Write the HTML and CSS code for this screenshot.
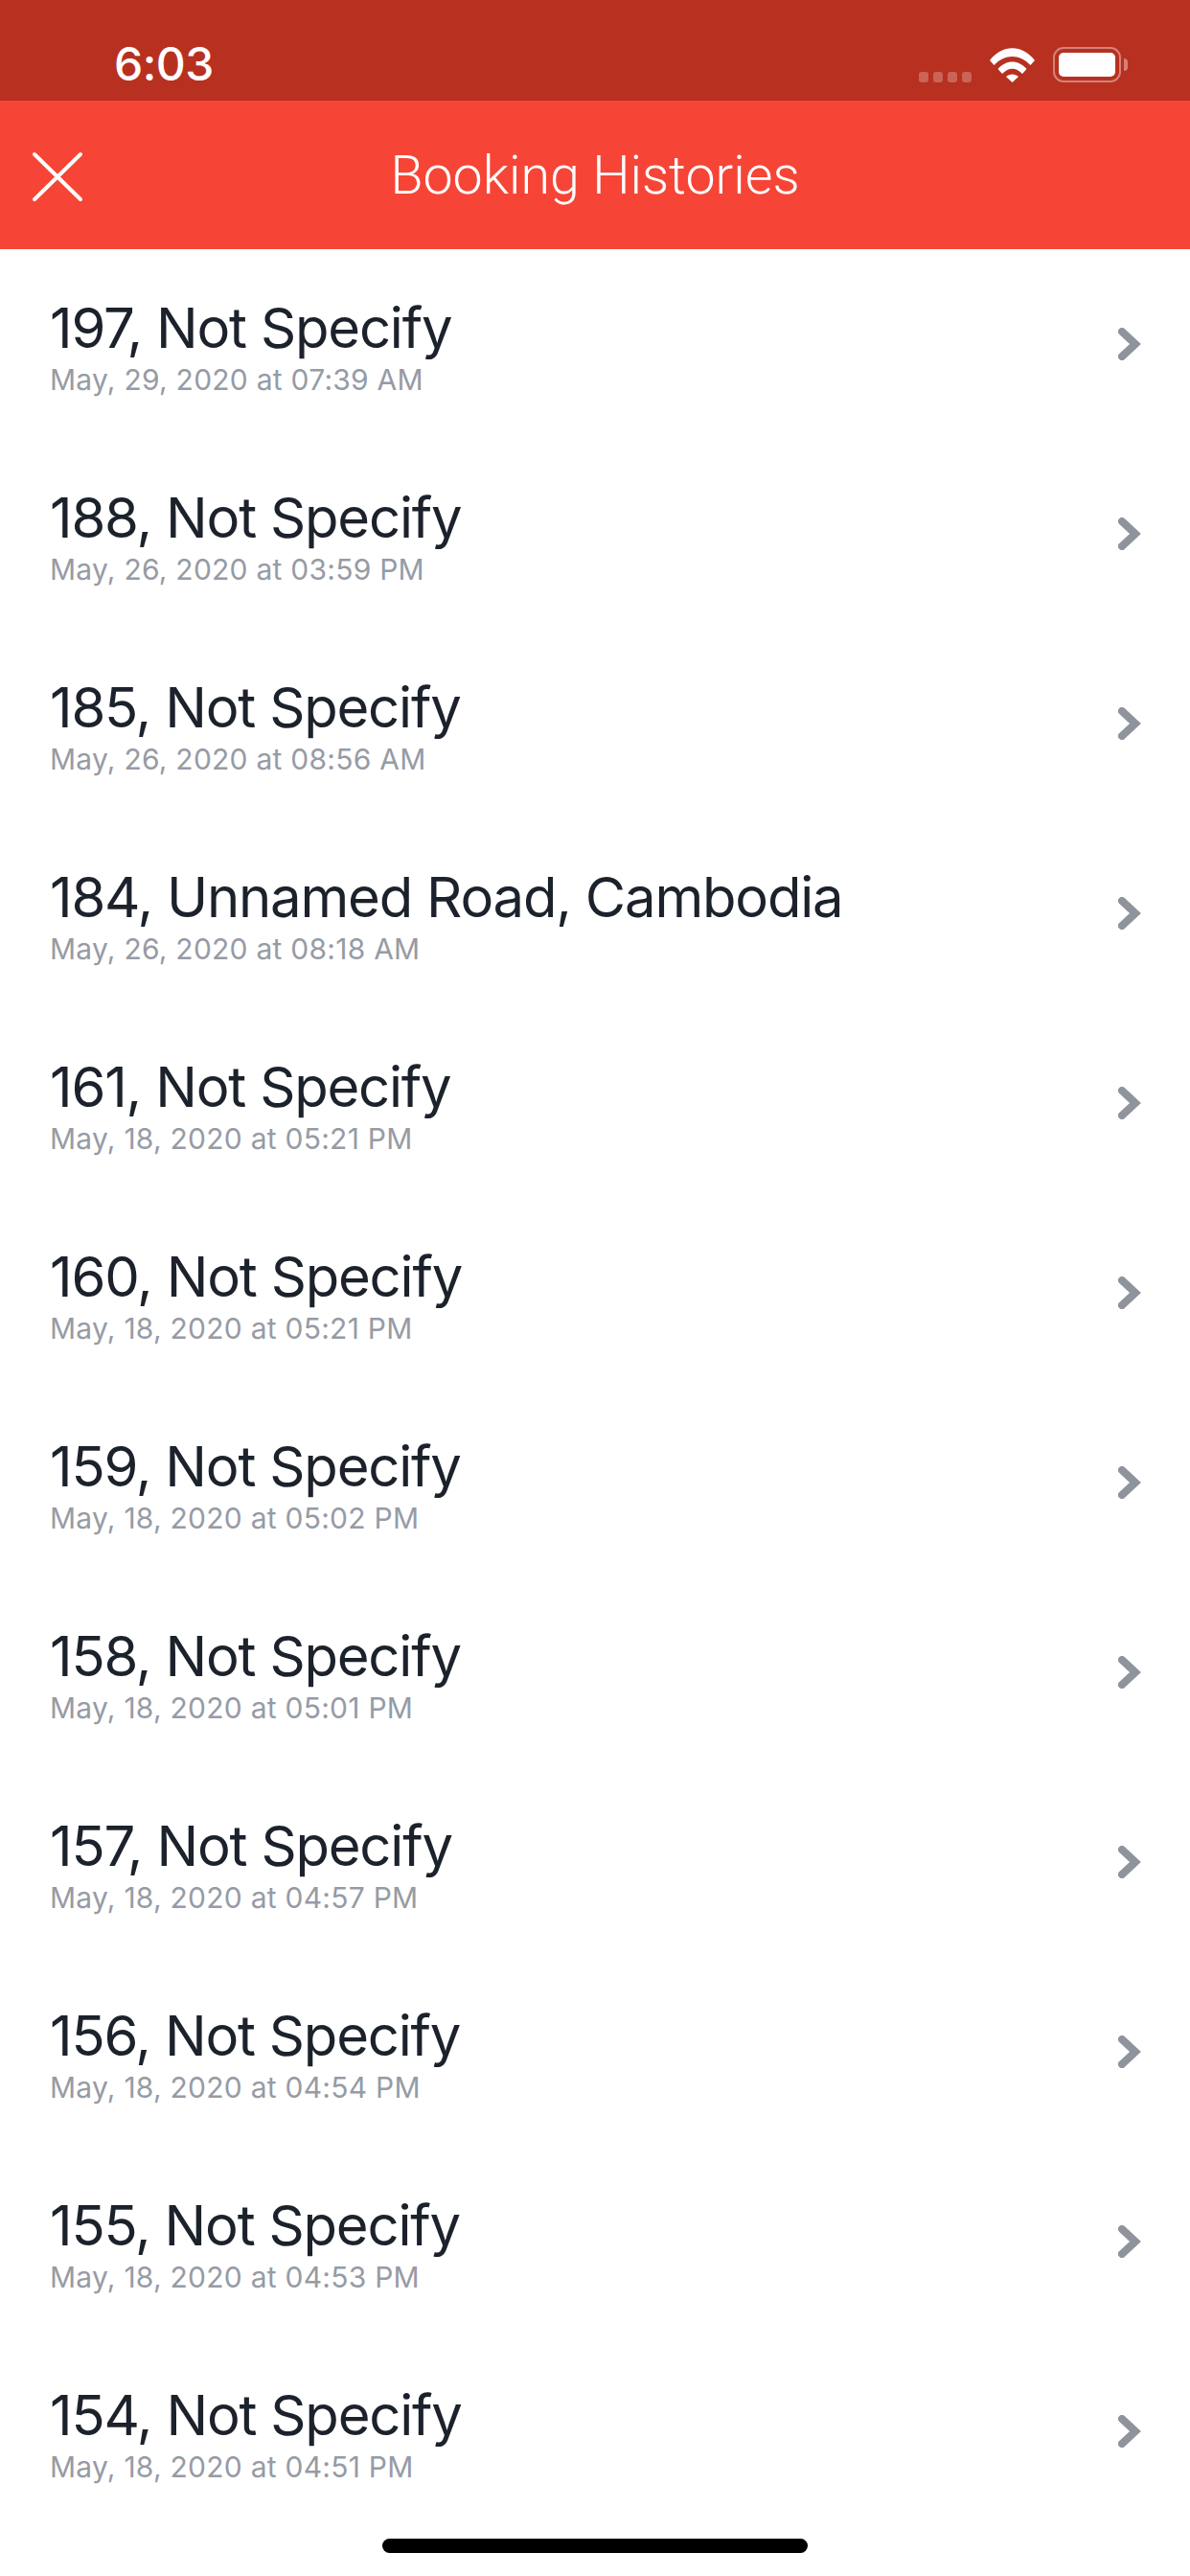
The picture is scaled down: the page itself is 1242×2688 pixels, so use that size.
FILE: index.html
```html
<!DOCTYPE html>
<html lang="en">
<head>
    <meta charset="UTF-8">
    <title>Booking Histories</title>
    <link rel="stylesheet" href="styles.css">
</head>
<body>
    <div class="status-bar">
        <div class="status-time">6:03</div>
        <div class="status-icons">
            <div class="signal-dots">
                <span></span><span></span><span></span><span></span>
            </div>
            <svg class="wifi-icon" viewBox="0 0 47 36" width="47" height="36">
                <path d="M0 13 C13 -4 34 -4 47 13 L42.500 18 C31 6 16 6 4.500 18 Z" fill="#fff"/>
                <path d="M8.500 22 C17 12 30 12 38.500 22 L34 27 C27 20 20 20 13 27 Z" fill="#fff"/>
                <path d="M17 30 C20.500 26.500 26.500 26.500 30 30 L23.500 36 Z" fill="#fff"/>
            </svg>
            <div class="battery">
                <div class="battery-body"><div class="battery-fill"></div></div>
                <div class="battery-cap"></div>
            </div>
        </div>
    </div>

    <header class="app-header">
        <button class="close-btn">
            <svg viewBox="0 0 54 53" width="54" height="53">
                <path d="M3 3 L51 50 M51 3 L3 50" stroke="#fff" stroke-width="4" stroke-linecap="round" fill="none"/>
            </svg>
        </button>
        <h1>Booking Histories</h1>
    </header>

    <ul class="history-list">
        <li class="history-row">
            <div class="history-text">
                <div class="history-title">197, Not Specify</div>
                <div class="history-date">May, 29, 2020 at 07:39 AM</div>
            </div>
            <svg class="chevron" viewBox="0 0 24 34" width="24" height="34"><path d="M4 4 L18 17 L4 30" /></svg>
        </li>
        <li class="history-row">
            <div class="history-text">
                <div class="history-title">188, Not Specify</div>
                <div class="history-date">May, 26, 2020 at 03:59 PM</div>
            </div>
            <svg class="chevron" viewBox="0 0 24 34" width="24" height="34"><path d="M4 4 L18 17 L4 30" /></svg>
        </li>
        <li class="history-row">
            <div class="history-text">
                <div class="history-title">185, Not Specify</div>
                <div class="history-date">May, 26, 2020 at 08:56 AM</div>
            </div>
            <svg class="chevron" viewBox="0 0 24 34" width="24" height="34"><path d="M4 4 L18 17 L4 30" /></svg>
        </li>
        <li class="history-row">
            <div class="history-text">
                <div class="history-title">184, Unnamed Road, Cambodia</div>
                <div class="history-date">May, 26, 2020 at 08:18 AM</div>
            </div>
            <svg class="chevron" viewBox="0 0 24 34" width="24" height="34"><path d="M4 4 L18 17 L4 30" /></svg>
        </li>
        <li class="history-row">
            <div class="history-text">
                <div class="history-title">161, Not Specify</div>
                <div class="history-date">May, 18, 2020 at 05:21 PM</div>
            </div>
            <svg class="chevron" viewBox="0 0 24 34" width="24" height="34"><path d="M4 4 L18 17 L4 30" /></svg>
        </li>
        <li class="history-row">
            <div class="history-text">
                <div class="history-title">160, Not Specify</div>
                <div class="history-date">May, 18, 2020 at 05:21 PM</div>
            </div>
            <svg class="chevron" viewBox="0 0 24 34" width="24" height="34"><path d="M4 4 L18 17 L4 30" /></svg>
        </li>
        <li class="history-row">
            <div class="history-text">
                <div class="history-title">159, Not Specify</div>
                <div class="history-date">May, 18, 2020 at 05:02 PM</div>
            </div>
            <svg class="chevron" viewBox="0 0 24 34" width="24" height="34"><path d="M4 4 L18 17 L4 30" /></svg>
        </li>
        <li class="history-row">
            <div class="history-text">
                <div class="history-title">158, Not Specify</div>
                <div class="history-date">May, 18, 2020 at 05:01 PM</div>
            </div>
            <svg class="chevron" viewBox="0 0 24 34" width="24" height="34"><path d="M4 4 L18 17 L4 30" /></svg>
        </li>
        <li class="history-row">
            <div class="history-text">
                <div class="history-title">157, Not Specify</div>
                <div class="history-date">May, 18, 2020 at 04:57 PM</div>
            </div>
            <svg class="chevron" viewBox="0 0 24 34" width="24" height="34"><path d="M4 4 L18 17 L4 30" /></svg>
        </li>
        <li class="history-row">
            <div class="history-text">
                <div class="history-title">156, Not Specify</div>
                <div class="history-date">May, 18, 2020 at 04:54 PM</div>
            </div>
            <svg class="chevron" viewBox="0 0 24 34" width="24" height="34"><path d="M4 4 L18 17 L4 30" /></svg>
        </li>
        <li class="history-row">
            <div class="history-text">
                <div class="history-title">155, Not Specify</div>
                <div class="history-date">May, 18, 2020 at 04:53 PM</div>
            </div>
            <svg class="chevron" viewBox="0 0 24 34" width="24" height="34"><path d="M4 4 L18 17 L4 30" /></svg>
        </li>
        <li class="history-row">
            <div class="history-text">
                <div class="history-title">154, Not Specify</div>
                <div class="history-date">May, 18, 2020 at 04:51 PM</div>
            </div>
            <svg class="chevron" viewBox="0 0 24 34" width="24" height="34"><path d="M4 4 L18 17 L4 30" /></svg>
        </li>
    </ul>

    <div class="home-indicator"></div>
</body>
</html>
```

FILE: styles.css
```css
* {
    box-sizing: border-box;
}
body {
    margin: 0;
    width: 1242px;
    height: 2688px;
    background: #fff;
    font-family: 'Inter', sans-serif;
    overflow: hidden;
    position: relative;
}
.status-bar {
    height: 105px;
    background: #b8301f;
    display: flex;
    justify-content: space-between;
    align-items: flex-start;
    padding: 44px 65px 0 119px;
}
.status-time {
    color: #fff;
    font-family: 'Inter', sans-serif;
    font-size: 48px;
    font-weight: 500;
    line-height: 46px;
    letter-spacing: -0.5px;
}
.status-icons {
    display: flex;
    align-items: flex-end;
    height: 42px;
    padding-top: 5px;
}
.signal-dots {
    display: flex;
    gap: 5px;
    margin-right: 19px;
}
.signal-dots span {
    width: 10px;
    height: 11px;
    border-radius: 3px;
    background: rgba(255, 255, 255, 0.25);
}
.wifi-icon {
    margin-right: 19px;
    display: block;
}
.battery {
    display: flex;
    align-items: center;
}
.battery-body {
    width: 71px;
    height: 37px;
    border: 2px solid rgba(255, 255, 255, 0.4);
    border-radius: 11px;
    padding: 4px;
}
.battery-fill {
    width: 100%;
    height: 100%;
    background: #fff;
    border-radius: 5px;
}
.battery-cap {
    width: 4px;
    height: 13px;
    margin-left: 3px;
    border-radius: 0 6px 6px 0;
    background: rgba(255, 255, 255, 0.4);
}
.app-header {
    height: 155px;
    background: #f64536;
    display: flex;
    align-items: center;
    justify-content: center;
    position: relative;
}
.app-header h1 {
    margin: 2px 0 0;
    color: #fff;
    font-family: 'Roboto', sans-serif;
    font-size: 55.500px;
    font-weight: 300;
}
.close-btn {
    position: absolute;
    left: 33px;
    top: 53px;
    padding: 0;
    border: none;
    background: none;
    line-height: 0;
}
.history-list {
    list-style: none;
    margin: 0;
    padding: 0;
}
.history-row {
    height: 198px;
    display: flex;
    justify-content: space-between;
    align-items: center;
    padding: 4px 51px 0 52px;
}
.history-title {
    color: #1c222b;
    font-family: 'Inter', sans-serif;
    font-size: 58px;
    font-weight: 400;
    line-height: 68px;
    letter-spacing: -1.200px;
}
.history-date {
    color: #969ba5;
    font-family: 'Inter', sans-serif;
    font-size: 30px;
    line-height: 36px;
    margin-top: 2px;
    letter-spacing: 0.250px;
}
.chevron {
    display: block;
    margin-bottom: 5px;
}
.chevron path {
    fill: none;
    stroke: #8f939c;
    stroke-width: 8;
    stroke-linecap: round;
    stroke-linejoin: miter;
}
.home-indicator {
    position: absolute;
    left: 399px;
    top: 2649px;
    width: 444px;
    height: 15px;
    border-radius: 8px;
    background: #000;
}
```
